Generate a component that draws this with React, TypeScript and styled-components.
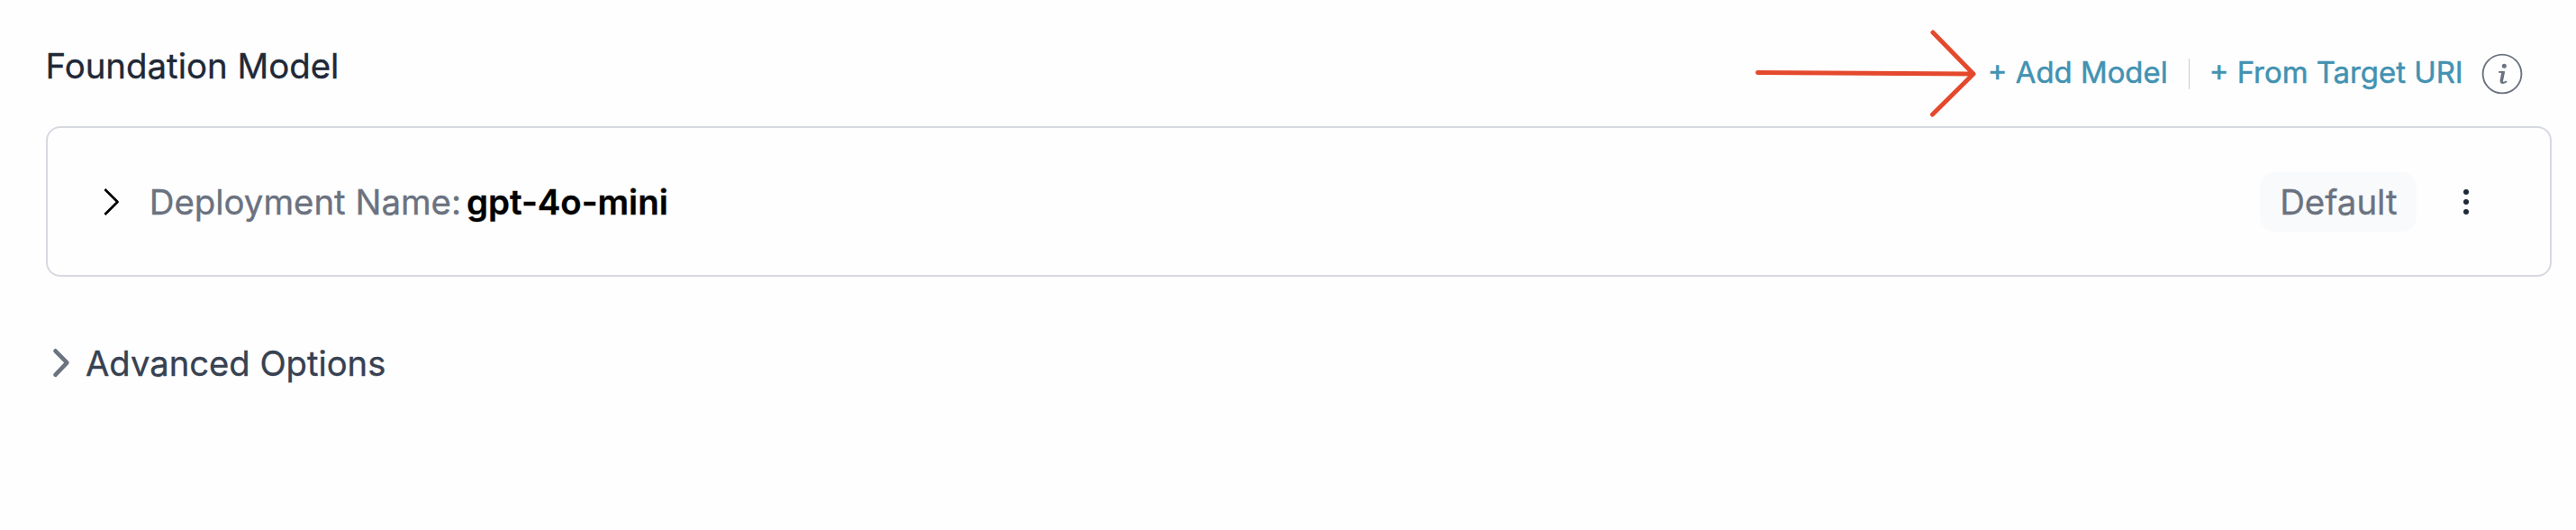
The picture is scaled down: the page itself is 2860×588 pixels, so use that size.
import React from "react";
import styled, { createGlobalStyle } from "styled-components";

const GlobalStyle = createGlobalStyle`
  *, *::before, *::after { box-sizing: border-box; }
  body {
    margin: 0;
    background: #fefefe;
    font-family: Inter, "Liberation Sans", sans-serif;
    -webkit-text-stroke: 0.35px currentColor;
  }
`;

const Page = styled.main`
  display: flex;
  flex-direction: column;
  width: 2860px;
  height: 588px;
  padding: 0 27px 0 51px;
  overflow: hidden;
`;

const Header = styled.header`
  display: flex;
  justify-content: space-between;
  align-items: flex-start;
  height: 140px;
`;

const Title = styled.h2`
  margin: 49px 0 0 -0.5px;
  font-size: 38.4px;
  font-weight: 400;
  line-height: 48px;
  color: #1f2937;
`;

const Actions = styled.div`
  position: relative;
  display: flex;
  align-items: center;
  height: 48px;
  margin: 58px 32px 0 0;
`;

const LinkButton = styled.button`
  border: 0;
  padding: 0;
  margin-bottom: 4px;
  background: none;
  font: 400 32.9px/48px Inter, "Liberation Sans", sans-serif;
  -webkit-text-stroke: 0.5px currentColor;
  color: #4292b2;
  white-space: nowrap;
`;

const Divider = styled.span`
  width: 1px;
  height: 34px;
  margin: 0 22px 0 23px;
  background: #c9cdd4;
`;

const InfoIcon = styled.svg`
  width: 46px;
  height: 46px;
  margin-left: 20.3px;
`;

const Arrow = styled.svg`
  position: absolute;
  right: 601.5px;
  top: -30px;
  width: 260px;
  height: 108px;
`;

const Card = styled.section`
  display: flex;
  align-items: center;
  height: 167px;
  padding: 0 84.7px 0 61px;
  border: 2px solid #d6d9df;
  border-radius: 16px;
`;

const Chevron = styled.svg`
  flex: none;
  width: 22px;
  height: 34px;
`;

const Name = styled.div`
  display: flex;
  gap: 6px;
  margin-left: 29.7px;
  font-size: 38.4px;
  line-height: 48px;
  color: #6b7280;
  white-space: nowrap;
`;

const ModelName = styled.strong`
  font-weight: 600;
  color: #000;
`;

const Badge = styled.span`
  display: flex;
  align-items: center;
  justify-content: center;
  width: 174px;
  height: 66px;
  margin-left: auto;
  border-radius: 16px;
  background: #f9fafb;
  font-size: 38.4px;
  color: #6b7280;
`;

const Menu = styled.svg`
  flex: none;
  width: 16px;
  height: 40px;
  margin-left: 47px;
`;

const Advanced = styled.div`
  display: flex;
  align-items: center;
  gap: 16px;
  margin-top: 72px;
  padding-left: 6px;
  font-size: 38.2px;
  line-height: 48px;
  color: #374151;
`;

export default function App() {
  return (
    <>
      <GlobalStyle />
      <Page>
        <Header>
          <Title>Foundation Model</Title>
          <Actions>
            <Arrow viewBox="0 0 260 108" fill="none" stroke="#e4492d" strokeWidth="5" strokeLinecap="round" strokeLinejoin="round">
              <path d="M11.5 52.5L251 54M206 8L251 54L205.5 99" />
            </Arrow>
            <LinkButton>+ Add Model</LinkButton>
            <Divider />
            <LinkButton>+ From Target URI</LinkButton>
            <InfoIcon viewBox="0 0 46 46" fill="none" stroke="#6b7280">
              <circle cx="23" cy="23" r="21.4" strokeWidth="1.9" />
              <circle cx="25.3" cy="14.3" r="2.5" fill="#6b7280" stroke="none" />
              <path d="M19.2 20.9H24" strokeWidth="2" />
              <path d="M24.4 20L22.4 30Q22.1 32.5 24.2 32.2" strokeWidth="3.6" />
              <path d="M22.5 32.4Q25.3 33.3 28 31.2" strokeWidth="2" />
            </InfoIcon>
          </Actions>
        </Header>
        <Card>
          <Chevron viewBox="0 0 22 34" fill="none" stroke="#000" strokeWidth="2.8" strokeLinejoin="round">
            <path d="M2.4 3L16.5 17L2.4 31" />
          </Chevron>
          <Name>
            Deployment Name:<ModelName>gpt-4o-mini</ModelName>
          </Name>
          <Badge>Default</Badge>
          <Menu viewBox="0 0 16 40" fill="#1f2937">
            <circle cx="8" cy="9" r="3" />
            <circle cx="8" cy="20" r="3" />
            <circle cx="8" cy="31" r="3" />
          </Menu>
        </Card>
        <Advanced>
          <Chevron viewBox="0 0 22 34" fill="none" stroke="#6b7280" strokeWidth="4.6" strokeLinecap="round" strokeLinejoin="round">
            <path d="M4.5 3.3L17.4 16.3L4.5 29.8" />
          </Chevron>
          Advanced Options
        </Advanced>
      </Page>
    </>
  );
}
